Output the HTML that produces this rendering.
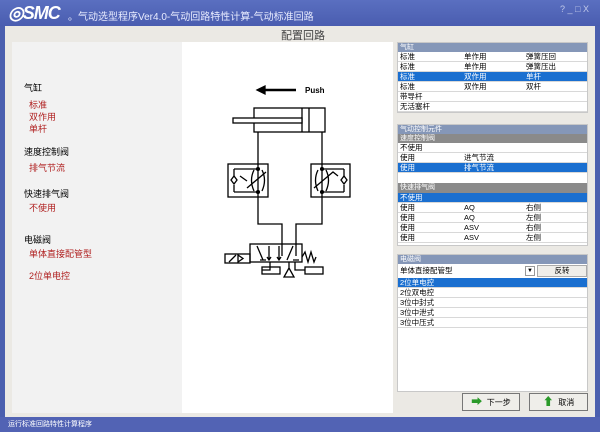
<!DOCTYPE html>
<html><head><meta charset="utf-8"><style>
*{margin:0;padding:0;box-sizing:border-box}
body{width:600px;height:432px;overflow:hidden;background:#4b5fae;font-family:"Liberation Sans","WenQuanYi Zen Hei","Noto Sans CJK SC",sans-serif;position:relative}
.abs{position:absolute}
.title{left:0;top:0;width:600px;height:26px;background:linear-gradient(#5a6fc0,#4a5db0);color:#fff}
.main{left:5px;top:26px;width:590px;height:391px;background:#ebe9e4}
.lp{left:12px;top:42px;width:170px;height:371px;background:#f2f2f2;font-size:9px}
.lp div{position:absolute}
.red{color:#b02020}
.dg{left:182px;top:42px;width:211px;height:371px;background:#fff}
.panel{background:#fff;border:1px solid #c8c8c8}
.hd{height:9px;background:#8597b8;color:#fff;font-size:7px;line-height:9px;padding-left:2px}
.hd2{height:9px;background:#8a8a8a;color:#fff;font-size:7px;line-height:9px;padding-left:2px}
.r{height:10px;font-size:7.5px;line-height:10px;border-bottom:1px solid #d8d8d8;position:relative;padding-left:2px}
.r span{position:absolute}
.s{background:#1a6fd0;color:#fff}
.btn{background:#efeeea;border:1px solid #777;font-size:8px;text-align:center;line-height:17px}
.status{left:0;top:417px;width:600px;height:15px;background:#5263b4;color:#fff;font-size:7px;line-height:15px;padding-left:8px}
</style></head><body>
<div class="abs title">
<div class="abs" style="left:8px;top:3px;font:bold italic 18px 'Liberation Sans';letter-spacing:-1px">◎SMC</div>
<div class="abs" style="left:68px;top:8px;font-size:10px;color:#e8ecff">。气动选型程序Ver4.0-气动回路特性计算-气动标准回路</div>
<div class="abs" style="left:560px;top:4px;font-size:9px;color:#c0c8e8">? _ □ X</div>
</div>
<div class="abs main"></div>
<div class="abs" style="left:0;width:600px;text-align:center;font-size:11px;color:#444;padding-left:6px;top:27px">配置回路</div>
<div class="abs lp">
<div style="left:12px;top:39px">气缸</div>
<div class="red" style="left:17px;top:56px">标准</div>
<div class="red" style="left:17px;top:68px">双作用</div>
<div class="red" style="left:17px;top:80px">单杆</div>
<div style="left:12px;top:103px">速度控制阀</div>
<div class="red" style="left:17px;top:119px">排气节流</div>
<div style="left:12px;top:145px">快速排气阀</div>
<div class="red" style="left:17px;top:159px">不使用</div>
<div style="left:12px;top:191px">电磁阀</div>
<div class="red" style="left:17px;top:205px">单体直接配管型</div>
<div class="red" style="left:17px;top:227px">2位单电控</div>
</div>
<div class="abs dg">
<svg width="211" height="371" viewBox="182 42 211 371" stroke="#000" fill="none" stroke-width="1.3">
<line x1="262" y1="90" x2="296" y2="90" stroke-width="2.5"/><path d="M257 90 L265 86 L265 94Z" fill="#000"/>
<text x="305" y="93" font-size="8" font-weight="bold" fill="#000" stroke="none" font-family="Liberation Sans">Push</text>
<rect x="254" y="108" width="71" height="24"/><line x1="302" y1="108" x2="302" y2="132"/><line x1="309" y1="108" x2="309" y2="132"/>
<rect x="233" y="118" width="69" height="5" fill="#fff"/>
<path d="M258 132 V224 H282 V256 M322 132 V224 H296 V256"/>
<rect x="228" y="164" width="40" height="33"/><rect x="311" y="164" width="39" height="33"/>
<path d="M234 169 H258 M234 192 H258 M234 169 V176 M234 192 V185"/><path d="M231 180 L234 176 L237 180 L234 184Z"/>
<path d="M254 170 Q249 180 254 191 M262 170 Q267 180 262 191 M247 188 L266 172"/><path d="M240 176 L247 181"/>
<circle cx="258" cy="169" r="1.4" fill="#000"/><circle cx="258" cy="192" r="1.4" fill="#000"/>
<path d="M322 169 H344 M322 192 H344 M344 169 V176 M344 192 V185"/><path d="M341 180 L344 176 L347 180 L344 184Z"/>
<path d="M318 170 Q313 180 318 191 M326 170 Q331 180 326 191 M314 188 L333 172 L338 176"/>
<circle cx="322" cy="169" r="1.4" fill="#000"/><circle cx="322" cy="192" r="1.4" fill="#000"/>
<rect x="250" y="244" width="52" height="18"/>
<rect x="225" y="254" width="25" height="9"/><path d="M229 262 L236 255 M238 255 L243 258.5 L238 262Z"/>
<path d="M257 246 L263 260 M260 260 H266 M269 246 V260 M267 257 L269 260 L271 257 M279 246 V260 M277 257 L279 260 L281 257 M293 246 L287 260 M293 260 H299"/>
<path d="M302 257 L305 252 L308 262 L311 252 L314 262 L316 257"/>
<path d="M270 262 V270 H262 M295 262 V270 H305"/><rect x="262" y="267" width="18" height="7"/><rect x="305" y="267" width="18" height="7"/>
<path d="M289 262 V268 M289 268 L284 277 H294Z"/>
</svg>
</div>
<div class="abs panel" style="left:397px;top:42px;width:191px;height:71px">
<div class="hd">气缸</div>
<div class="r"><span style="left:2px">标准</span><span style="left:66px">单作用</span><span style="left:128px">弹簧压回</span></div>
<div class="r"><span style="left:2px">标准</span><span style="left:66px">单作用</span><span style="left:128px">弹簧压出</span></div>
<div class="r s"><span style="left:2px">标准</span><span style="left:66px">双作用</span><span style="left:128px">单杆</span></div>
<div class="r"><span style="left:2px">标准</span><span style="left:66px">双作用</span><span style="left:128px">双杆</span></div>
<div class="r"><span style="left:2px">带导杆</span></div>
<div class="r"><span style="left:2px">无活塞杆</span></div>
</div>
<div class="abs panel" style="left:397px;top:124px;width:191px;height:122px">
<div class="hd">气动控制元件</div>
<div class="hd2">速度控制阀</div>
<div class="r"><span style="left:2px">不使用</span></div>
<div class="r"><span style="left:2px">使用</span><span style="left:66px">进气节流</span></div>
<div class="r s"><span style="left:2px">使用</span><span style="left:66px">排气节流</span></div>
<div style="height:10px"></div>
<div class="hd2" style="height:10px">快速排气阀</div>
<div class="r s"><span style="left:2px">不使用</span></div>
<div class="r"><span style="left:2px">使用</span><span style="left:66px">AQ</span><span style="left:128px">右侧</span></div>
<div class="r"><span style="left:2px">使用</span><span style="left:66px">AQ</span><span style="left:128px">左侧</span></div>
<div class="r"><span style="left:2px">使用</span><span style="left:66px">ASV</span><span style="left:128px">右侧</span></div>
<div class="r"><span style="left:2px">使用</span><span style="left:66px">ASV</span><span style="left:128px">左侧</span></div>
</div>
<div class="abs panel" style="left:397px;top:254px;width:191px;height:138px">
<div class="hd">电磁阀</div>
<div style="height:14px;position:relative;font-size:7.5px;line-height:14px;padding-left:2px">单体直接配管型
<div class="abs" style="left:127px;top:2px;width:10px;height:10px;border:1px solid #999;font-size:6px;line-height:8px;text-align:center">▼</div>
<div class="abs" style="left:139px;top:1px;width:50px;height:12px;background:#efeeea;border:1px solid #aaa;text-align:center;line-height:10px">反转</div></div>
<div class="r s">2位单电控</div>
<div class="r">2位双电控</div>
<div class="r">3位中封式</div>
<div class="r">3位中泄式</div>
<div class="r">3位中压式</div>
</div>
<div class="abs btn" style="left:462px;top:393px;width:58px;height:18px"><span style="color:#2a9a2a;font-size:11px">➡</span>&nbsp; 下一步</div>
<div class="abs btn" style="left:529px;top:393px;width:59px;height:18px"><span style="color:#2a9a2a;font-size:11px">⬆</span>&nbsp; 取消</div>
<div class="abs status">运行标准回路特性计算程序</div>
</body></html>
